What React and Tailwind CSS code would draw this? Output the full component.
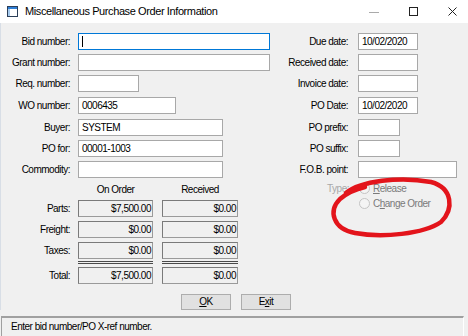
import React from 'react'

const rows = [
  { h: 'h-[21px]', l: 'Bid number:', w: 'w-[192px]', v: '', focus: true, rl: 'Due date:', rw: 'w-[60px]', rv: '10/02/2020' },
  { h: 'h-[21px]', l: 'Grant number:', w: 'w-[192px]', v: '', rl: 'Received date:', rw: 'w-[60px]', rv: '' },
  { h: 'h-[22px]', l: 'Req. number:', w: 'w-[61px]', v: '', rl: 'Invoice date:', rw: 'w-[60px]', rv: '' },
  { h: 'h-[22px]', l: 'WO number:', w: 'w-[98px]', v: '0006435', rl: 'PO Date:', rw: 'w-[60px]', rv: '10/02/2020' },
  { h: 'h-[21px]', l: 'Buyer:', w: 'w-[145px]', v: 'SYSTEM', rl: 'PO prefix:', rw: 'w-[42px]', rv: '' },
  { h: 'h-[21px]', l: 'PO for:', w: 'w-[145px]', v: '00001-1003', rl: 'PO suffix:', rw: 'w-[42px]', rv: '' },
  { h: 'h-[17px]', l: 'Commodity:', w: 'w-[145px]', v: '', rl: 'F.O.B. point:', rw: 'w-[99px]', rv: '' },
]

const amounts = [
  ['Parts:', '$7,500.00', '$0.00'],
  ['Freight:', '$0.00', '$0.00'],
  ['Taxes:', '$0.00', '$0.00'],
]

function Field({ w, v, focus }) {
  return (
    <div className={`${w} h-[17px] bg-white border flex items-center px-[3px] ${focus ? 'border-[#0078d7]' : 'border-[#a8a8a8]'}`}>
      {focus ? <span className="w-px h-[11px] bg-black" /> : v}
    </div>
  )
}

function Amt({ w, v }) {
  return (
    <div className={`${w} h-[17px] bg-[#f0f0f0] border border-[#9a9a9a] border-l-[#7a7a7a] border-t-[#7a7a7a] flex items-center justify-end pr-[1px]`}>{v}</div>
  )
}

function Radio({ label, u, rest, pre = '' }) {
  return (
    <div className="h-[15px] flex items-center">
      <span className="w-[11px] h-[11px] rounded-full border border-[#c4c4c4] bg-[#f4f4f4]" />
      <span className="ml-[3px] text-[#7a7a7a]">{pre}<span className="underline">{u}</span>{rest}</span>
    </div>
  )
}

export default function App() {
  return (
    <div className="relative w-[468px] h-[336px] overflow-hidden bg-[#f0f0f0] text-[10px] tracking-[-0.5px] text-black font-['Liberation_Sans',Arial,sans-serif] leading-none">
      {/* title bar */}
      <div className="h-[23px] bg-white flex items-center">
        <svg width="11" height="11" viewBox="0 0 11 11" className="ml-[7px]">
          <rect x="0.5" y="0.5" width="10" height="10" fill="#fff" stroke="#2b3e58" />
          <rect x="1" y="1" width="9" height="2" fill="#2f7fd6" />
          <rect x="1" y="3" width="2" height="7" fill="#a9cdf0" />
        </svg>
        <span className="ml-[7px] text-[11px] tracking-[-0.4px]">Miscellaneous Purchase Order Information</span>
        <div className="flex-1" />
        <svg width="10" height="10" viewBox="0 0 10 10"><path d="M0 5.5h10" stroke="#aaa" /></svg>
        <svg width="9" height="9" viewBox="0 0 9 9" className="ml-[30px]"><rect x="0.5" y="0.5" width="8" height="8" fill="none" stroke="#222" /></svg>
        <svg width="9" height="9" viewBox="0 0 9 9" className="ml-[30px] mr-[11px]"><path d="M0.5 0.5l8 8M8.5 0.5l-8 8" stroke="#222" /></svg>
      </div>

      {/* upper fields */}
      <div className="pt-[10px] border-l border-[#d8dee6]">
        {rows.map(r => (
          <div key={r.l} className={`${r.h} flex items-start`}>
            <div className="w-[69px] h-[17px] flex items-center justify-end">{r.l}</div>
            <div className="w-[199px] pl-[8px]"><Field w={r.w} v={r.v} focus={r.focus} /></div>
            <div className="w-[79px] h-[17px] flex items-center justify-end">{r.rl}</div>
            <div className="pl-[10px]"><Field w={r.rw} v={r.rv} /></div>
          </div>
        ))}

        {/* lower section */}
        <div className="flex">
          <div className="w-[237px]">
            <div className="h-[22px] flex items-center pt-[2px]">
              <div className="ml-[77px] w-[75px] text-center">On Order</div>
              <div className="ml-[9px] w-[76px] text-center">Received</div>
            </div>
            {amounts.map(a => (
              <div key={a[0]} className="flex mb-[4px] last:mb-0">
                <div className="w-[69px] h-[17px] flex items-center justify-end">{a[0]}</div>
                <div className="ml-[8px]"><Amt w="w-[75px]" v={a[1]} /></div>
                <div className="ml-[9px]"><Amt w="w-[76px]" v={a[2]} /></div>
              </div>
            ))}
            <div className="flex ml-[77px] mt-[-2px]">
              <div className="w-[75px] h-[3px] border-y border-[#4a4a4a]" />
              <div className="ml-[9px] w-[76px] h-[3px] border-y border-[#4a4a4a]" />
            </div>
            <div className="flex mt-[3px]">
              <div className="w-[69px] h-[17px] flex items-center justify-end">Total:</div>
              <div className="ml-[8px]"><Amt w="w-[75px]" v="$7,500.00" /></div>
              <div className="ml-[9px]"><Amt w="w-[76px]" v="$0.00" /></div>
            </div>
          </div>
          <div className="ml-[31px] flex pt-[3px]">
            <div className="w-[80px] h-[15px] flex items-center justify-end text-[#a8a8a8]">Type:</div>
            <div className="ml-[10px] flex flex-col">
              <Radio u="R" rest="elease" />
              <Radio pre="C" u="h" rest="ange Order" />
            </div>
          </div>
        </div>

        {/* buttons */}
        <div className="flex mt-[10px] pl-[180px] gap-[10px]">
          <button className="w-[50px] h-[16px] bg-[#e1e1e1] border border-[#adadad] flex items-center justify-center"><span className="underline">O</span>K</button>
          <button className="w-[50px] h-[16px] bg-[#e1e1e1] border border-[#adadad] flex items-center justify-center">E<span className="underline">x</span>it</button>
        </div>
      </div>

      {/* status bar */}
      <div className="mt-[6px] ml-[1px] w-[463px] h-[20px] border-t-2 border-l border-[#a0a0a0] border-r border-r-white flex items-center pl-[9px]">
        Enter bid number/PO X-ref number.
      </div>

      <svg className="absolute inset-0 pointer-events-none" width="468" height="336" viewBox="0 0 468 336">
        <path d="M346 193 C360 181, 400 176, 431 182 C453 188, 454 209, 441 222 C424 234, 382 238, 355 233 C333 229, 328 211, 340 199 C347 193, 356 189, 365 187" fill="none" stroke="#e3141b" strokeWidth="4.5" strokeLinecap="round" />
      </svg>
    </div>
  )
}
